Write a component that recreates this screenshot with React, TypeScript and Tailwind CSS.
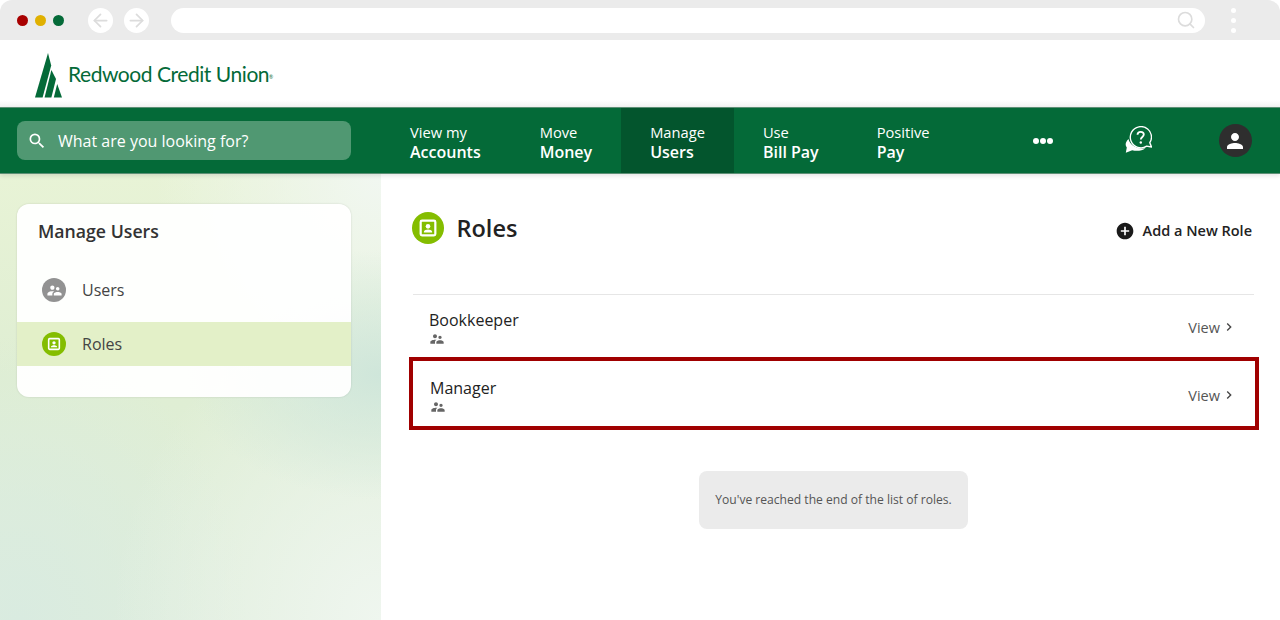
import { ArrowLeft, ArrowRight, Search } from 'lucide-react';
import {
  MdAddCircle,
  MdChevronRight,
  MdPerson,
  MdSearch,
  MdSupervisorAccount,
} from 'react-icons/md';

const navItems = [
  { top: 'View my', bottom: 'Accounts', pad: 'pr-[30px]' },
  { top: 'Move', bottom: 'Money', pad: 'pr-[29px]' },
  { top: 'Manage', bottom: 'Users', pad: 'pr-[29px]', active: true },
  { top: 'Use', bottom: 'Bill Pay', pad: 'pr-[29px]' },
  { top: 'Positive', bottom: 'Pay', pad: 'pr-[29px]' },
];

function Logo() {
  return (
    <svg width="28" height="45" viewBox="0 0 28 45" className="shrink-0" aria-hidden="true">
      <path d="M13 0 0 44.500h7.600L16.200 12.500z" fill="#046a38" />
      <path d="M16.400 17 9.600 44.500h6.800l4.600-18.500z" fill="#046a38" />
      <path d="M22.200 31 18.800 44.500H27z" fill="#046a38" />
    </svg>
  );
}

function HelpIcon() {
  return (
    <svg width="27" height="27" viewBox="0 0 27 27" aria-hidden="true">
      <path
        d="M3.500 13C.8 15.500-.4 19 1.800 21.500L.8 26.800l6.400-2.600c4.200 1.200 9.800.8 13.200-2-6.800 1.400-15.200-2-16.900-9.200z"
        fill="#fff"
      />
      <path
        d="M26.500 11.200a10.600 10.600 0 1 0-4.800 8.900l4.800.9-1.700-4.300a10.600 10.600 0 0 0 1.700-5.500z"
        fill="#046a38"
        stroke="#fff"
        strokeWidth="1.400"
        strokeLinejoin="round"
      />
      <path
        d="M12.500 8.800c.1-1.800 1.500-2.900 3.200-2.900 1.800 0 3.100 1.100 3.100 2.700 0 2.400-3 2.400-3 5"
        fill="none"
        stroke="#fff"
        strokeWidth="1.800"
      />
      <circle cx="15.800" cy="16.500" r="1.200" fill="#fff" />
    </svg>
  );
}

function RoleIcon({ size }: { size: number }) {
  return (
    <svg width={size} height={size} viewBox="0 0 24 24" fill="none" aria-hidden="true">
      <rect x="4" y="4" width="16" height="16" rx="1.500" stroke="#fff" strokeWidth="2.400" />
      <circle cx="12" cy="10.200" r="2.500" fill="#fff" />
      <path d="M7.500 16.800v-.8c0-1.500 2.800-2.300 4.500-2.300s4.500.8 4.500 2.300v.8z" fill="#fff" />
    </svg>
  );
}

function RoleRow({ name, className }: { name: string; className: string }) {
  return (
    <div className={`flex items-center justify-between pt-1 ${className}`}>
      <div className="flex flex-col">
        <span className="text-[16px] leading-[22px] text-[#222]">{name}</span>
        <MdSupervisorAccount className="text-[#666]" size={16} />
      </div>
      <span className="flex items-center gap-px text-[14.500px] text-[#555]">
        View
        <MdChevronRight size={16} className="text-[#444] -mt-[2px]" />
      </span>
    </div>
  );
}

export default function App() {
  return (
    <div className="w-[1280px] h-[620px] overflow-hidden flex flex-col bg-white font-['Open_Sans',sans-serif]">
      <div className="h-10 shrink-0 bg-[#ebebeb] rounded-t-xl flex items-center pl-[17px]">
        <span className="w-[11px] h-[11px] rounded-full bg-[#a80000]" />
        <span className="w-[11px] h-[11px] rounded-full bg-[#e0b000] ml-[7px]" />
        <span className="w-[11px] h-[11px] rounded-full bg-[#046a38] ml-[7px]" />
        <span className="w-[25px] h-[25px] rounded-full bg-white ml-6 flex items-center justify-center">
          <ArrowLeft size={21} className="text-[#dcdcdc]" />
        </span>
        <span className="w-[25px] h-[25px] rounded-full bg-white ml-[11px] flex items-center justify-center">
          <ArrowRight size={21} className="text-[#dcdcdc]" />
        </span>
        <div className="w-[1034px] h-[25px] rounded-full bg-white ml-[22px] flex items-center justify-end pr-[9px]">
          <Search size={20} className="text-[#dcdcdc]" />
        </div>
        <div className="ml-[26px] flex flex-col gap-[5px]">
          <span className="w-[5px] h-[5px] rounded-full bg-white" />
          <span className="w-[5px] h-[5px] rounded-full bg-white" />
          <span className="w-[5px] h-[5px] rounded-full bg-white" />
        </div>
      </div>

      <div className="h-[67px] shrink-0 flex items-center gap-[5px] pl-[35px] pt-[3px] bg-gradient-to-b from-white from-90% to-[#f2f2f2]">
        <Logo />
        <span className="font-['Lato',sans-serif] text-[21px] text-[#046a38] tracking-[-0.45px] -mt-[3px]">
          Redwood Credit Union
          <sup className="text-[5px] tracking-normal">®</sup>
        </span>
      </div>

      <div className="relative h-[67px] shrink-0 bg-[#046a38] border-y border-[#5d8f75] flex items-stretch shadow-[0_2px_4px_rgba(0,0,0,0.1)]">
        <div className="w-[381px] shrink-0 flex items-center pl-[17px]">
          <div className="w-[334px] h-[39px] rounded-lg bg-[#509872] flex items-center pl-[10px] gap-[11px] text-white">
            <MdSearch size={20} />
            <span className="text-[16px]">What are you looking for?</span>
          </div>
        </div>
        {navItems.map((item) => (
          <div
            key={item.top}
            className={`flex flex-col justify-center pl-[29px] ${item.pad} pt-[2px] text-white ${item.active ? 'bg-[#03552d]' : ''}`}
          >
            <span className="text-[14.700px] leading-[20px]">{item.top}</span>
            <span className="text-[16px] leading-[20px] font-semibold">{item.bottom}</span>
          </div>
        ))}
        <div className="flex items-center gap-px ml-[74px]">
          <span className="w-[6px] h-[6px] rounded-full bg-white" />
          <span className="w-[6px] h-[6px] rounded-full bg-white" />
          <span className="w-[6px] h-[6px] rounded-full bg-white" />
        </div>
        <div className="flex items-center ml-[72px] -mt-[2px]">
          <HelpIcon />
        </div>
        <div className="flex items-center ml-[67px]">
          <span className="w-[33px] h-[33px] rounded-full bg-[#2e2e2e] flex items-center justify-center text-white">
            <MdPerson size={24} />
          </span>
        </div>
      </div>

      <div className="flex-1 flex min-h-0">
        <aside className="w-[381px] shrink-0 pt-[30px] pl-[17px] bg-[radial-gradient(ellipse_at_100%_45%,#cfe6da,transparent_36%),radial-gradient(ellipse_at_100%_0%,#f1f7f1,transparent_42%),radial-gradient(ellipse_at_100%_100%,#eff6ef,transparent_50%),radial-gradient(ellipse_at_5%_100%,#d9ebe0,transparent_45%),linear-gradient(180deg,#e8f3d6,#dfeed3_45%,#e0eedc)]">
          <div className="w-[334px] h-[193px] rounded-xl bg-white/95 shadow-[0_0_2px_rgba(0,0,0,0.15)] overflow-hidden">
            <h2 className="pl-[21px] pt-[14px] text-[17.700px] leading-[26px] font-semibold text-[#333]">Manage Users</h2>
            <div className="flex items-center h-[44px] mt-6 pl-[25px] gap-4">
              <span className="w-6 h-6 rounded-full bg-[#929292] flex items-center justify-center text-white">
                <MdSupervisorAccount size={17} />
              </span>
              <span className="text-[16px] text-[#444]">Users</span>
            </div>
            <div className="flex items-center h-[44px] mt-[10px] pl-[25px] gap-4 bg-[#e3f0c8]">
              <span className="w-6 h-6 rounded-full bg-[#84bd00] flex items-center justify-center">
                <RoleIcon size={16} />
              </span>
              <span className="text-[16px] text-[#444]">Roles</span>
            </div>
          </div>
        </aside>

        <main className="flex-1 pl-8 pr-[26px] pt-[38px]">
          <div className="flex items-center justify-between h-8">
            <div className="flex items-center gap-[12.500px] -ml-px">
              <span className="w-8 h-8 rounded-full bg-[#84bd00] flex items-center justify-center">
                <RoleIcon size={22} />
              </span>
              <h1 className="text-[23.500px] font-semibold text-[#222] mt-[2px]">Roles</h1>
            </div>
            <span className="flex items-center gap-2 text-[14.500px] font-semibold text-[#222] mr-[2px] mt-[5px]">
              <MdAddCircle size={20} className="text-[#1a1a1a]" />
              Add a New Role
            </span>
          </div>

          <div className="mt-[50px] border-t border-[#e6e6e6]">
            <RoleRow name="Bookkeeper" className="pl-4 pr-[17px] h-[62px]" />
            <div className="-ml-1 -mr-[5px] border-4 border-[#a00000]">
              <RoleRow name="Manager" className="pl-[17px] pr-[18px] h-[65px]" />
            </div>
          </div>

          <div className="mt-[41px] mx-auto w-[269px] h-[58px] rounded-lg bg-[#ebebeb] flex items-center justify-center text-[12.100px] text-[#555]">
            You've reached the end of the list of roles.
          </div>
        </main>
      </div>
    </div>
  );
}
